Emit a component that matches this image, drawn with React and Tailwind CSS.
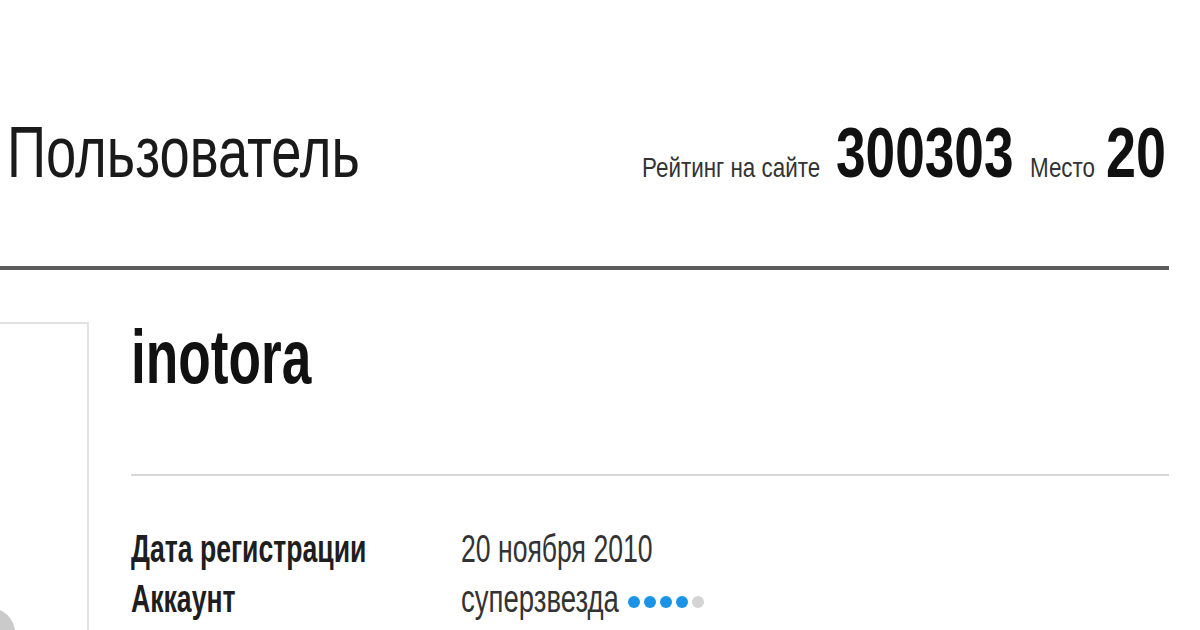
import React from "react";

function Sx({ w, s, children, className = "" }) {
  return (
    <span className={`inline-block whitespace-nowrap ${w}`}>
      <span className={`inline-block whitespace-nowrap origin-left ${s} ${className}`}>{children}</span>
    </span>
  );
}

export default function App() {
  return (
    <div className="relative w-[1200px] h-[630px] overflow-hidden bg-white text-[#111] font-['Liberation_Sans',Arial,sans-serif]">
      <div className="pt-[116px] pl-[7px] pr-[34px] flex items-baseline justify-between h-[188px]">
        <Sx w="w-[352px]" s="scale-x-[0.755]" className="text-[72px] leading-none text-[#1a1a1a]">Пользователь</Sx>
        <div className="flex items-baseline">
          <Sx w="w-[194px]" s="scale-x-[0.8]" className="text-[28px] leading-none text-[#333]">Рейтинг на сайте</Sx>
          <Sx w="w-[194px]" s="scale-x-[0.76]" className="text-[70px] leading-none font-bold">300303</Sx>
          <Sx w="w-[76px]" s="scale-x-[0.8]" className="text-[28px] leading-none text-[#333]">Место</Sx>
          <Sx w="w-[60px]" s="scale-x-[0.77]" className="text-[70px] leading-none font-bold">20</Sx>
        </div>
      </div>
      <div className="mt-[78px] h-[4px] w-[1169px] bg-[#5c5c5c]"></div>
      <div className="flex mt-[52px]">
        <div className="w-[89px] h-[320px] shrink-0 border-t-2 border-r-2 border-[#e2e2e2]"></div>
        <div className="ml-[42px] w-[1038px]">
          <div className="h-[76px] -mt-[3px] mb-[2px]">
            <Sx w="w-[190px]" s="scale-x-[0.70]" className="text-[76px] leading-none font-bold">inotora</Sx>
          </div>
          <div className="mt-[79px] h-[2px] bg-[#d6d6d6]"></div>
          <div className="mt-[48px] grid grid-cols-[330px_1fr] text-[38px] leading-[50px]">
            <Sx w="w-[330px]" s="scale-x-[0.70]" className="font-bold text-[#1e1e1e]">Дата регистрации</Sx>
            <Sx w="w-[300px]" s="scale-x-[0.70]" className="text-[#333]">20 ноября 2010</Sx>
            <Sx w="w-[330px]" s="scale-x-[0.70]" className="font-bold text-[#1e1e1e]">Аккаунт</Sx>
            <div className="flex items-center">
              <Sx w="w-[167px]" s="scale-x-[0.725]" className="text-[#333]">суперзвезда</Sx>
              <div className="flex items-center gap-[4px] mt-[6px]">
                <span className="w-[12px] h-[12px] rounded-full bg-[#1a94e6]"></span>
                <span className="w-[12px] h-[12px] rounded-full bg-[#1a94e6]"></span>
                <span className="w-[12px] h-[12px] rounded-full bg-[#1a94e6]"></span>
                <span className="w-[12px] h-[12px] rounded-full bg-[#1a94e6]"></span>
                <span className="w-[12px] h-[12px] rounded-full bg-[#d4d4d4]"></span>
              </div>
            </div>
          </div>
        </div>
      </div>
      <div className="absolute left-[-35px] top-[608px] w-[50px] h-[50px] rounded-full bg-[#cacaca]"></div>
    </div>
  );
}
